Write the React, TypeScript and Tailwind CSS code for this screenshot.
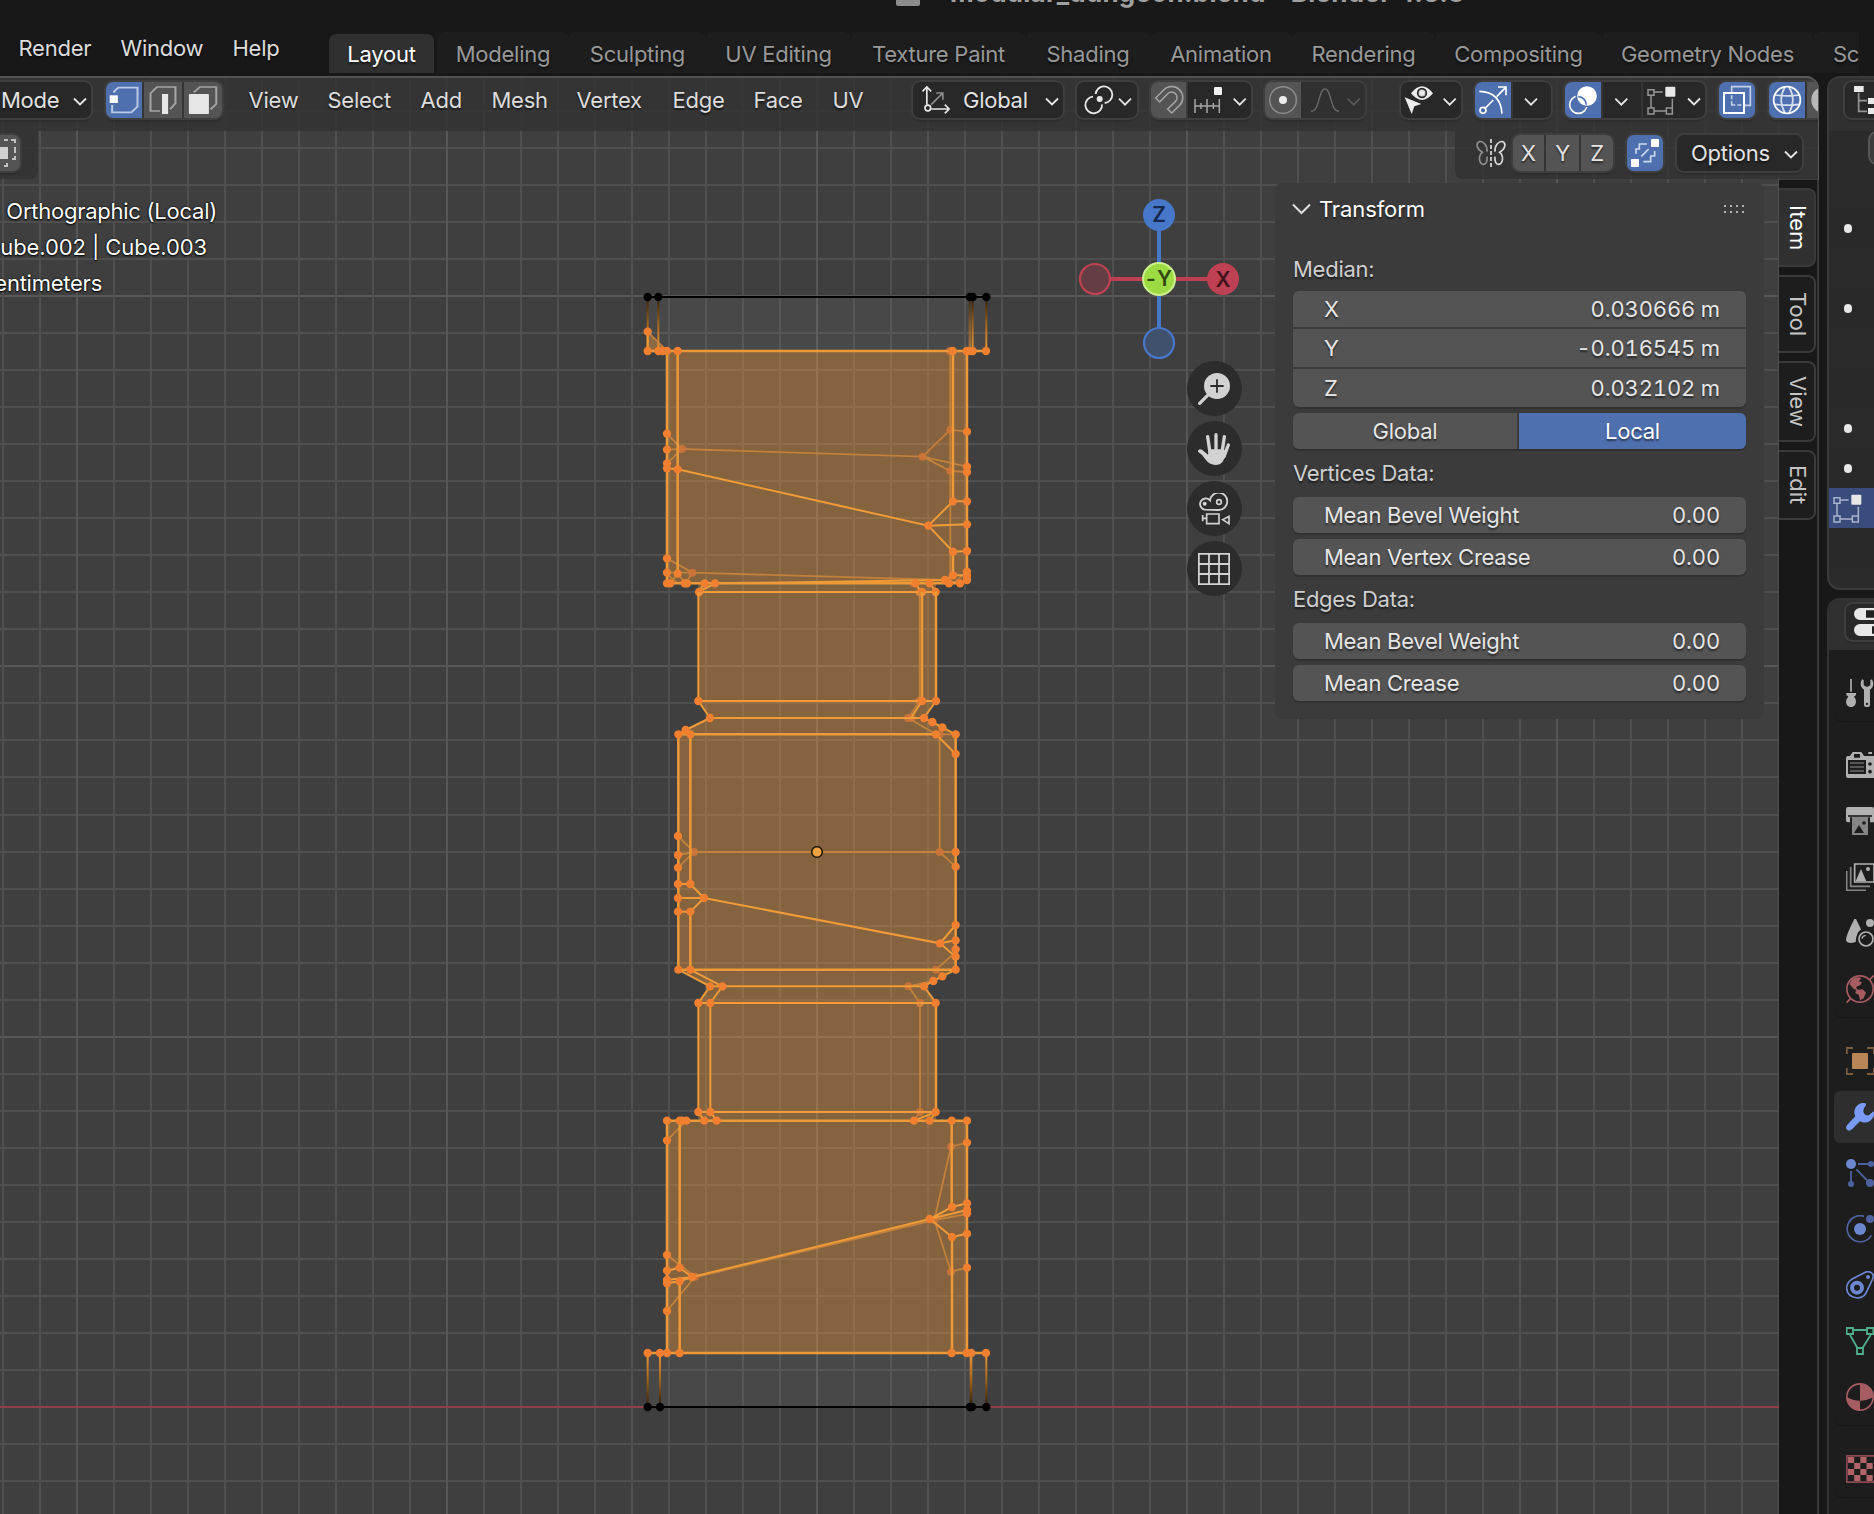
import React from "react";

type P = { children?: React.ReactNode };

function Ic({ vb, w, h, children, className = "", stretch = false }: P & { vb: string; w: number; h: number; className?: string; stretch?: boolean }) {
  return (
    <svg viewBox={vb} width={w} height={h} fill="none" preserveAspectRatio={stretch ? "none" : undefined} className={"block shrink-0 " + className}>
      {children}
    </svg>
  );
}

const SH = "[text-shadow:0_2px_2px_rgba(0,0,0,0.55)]";
const RING = "shadow-[0_0_0_2px_#3e3e3e,0_4px_1px_rgba(0,0,0,0.12)]";
const BTN = "flex h-9 shrink-0 overflow-hidden rounded-[7px] " + RING;

function Chevron({ color = "#e6e6e6", className = "" }: { color?: string; className?: string }) {
  return (
    <Ic vb="0 0 42 26" w={14} h={9} className={className}>
      <path d="M3 4 21 22 39 4" stroke={color} strokeWidth="5.5" />
    </Ic>
  );
}

/* ---------- top bar ---------- */

const tabs: [string, string][] = [
  ["Modeling", "w-[132px]"],
  ["Sculpting", "w-[137px]"],
  ["UV Editing", "w-[145px]"],
  ["Texture Paint", "w-[175px]"],
  ["Shading", "w-[124px]"],
  ["Animation", "w-[142px]"],
  ["Rendering", "w-[143px]"],
  ["Compositing", "w-[167px]"],
  ["Geometry Nodes", "w-[211px]"],
];

function TopBar() {
  return (
    <div className="relative flex h-[76px] shrink-0 bg-[#181818]">
      <div className="absolute left-[896px] top-0 h-[6px] w-6 rounded-b-[2px] bg-[#8c8c8c]" />
      <div className="absolute left-[950px] top-[-23px] w-[520px] whitespace-nowrap text-[26px] font-bold leading-[32px] text-[#a0a0a0] tracking-[0.25px]">
        modular_dungeon.blend - Blender 4.5.3
      </div>
      <div className={"flex w-[329px] shrink-0 pl-[18.5px] pt-[33px] leading-[30px] text-[#dcdcdc] " + SH}>
        <span className="w-[102px]">Render</span>
        <span className="w-[112px]">Window</span>
        <span>Help</span>
      </div>
      <div className="flex pt-8 text-[#989898]">
        <div className={"mt-[2px] h-[39px] w-[105px] rounded-t-[7px] bg-[#303030] text-center leading-[41px] text-white " + SH}>Layout</div>
        <div className="w-[3px]" />
        {tabs.map(([t, w]) => (
          <div key={t} className={"h-[41px] whitespace-nowrap rounded-t-[7px] bg-[#1d1d1d] text-center leading-[45px] " + w + " " + SH}>{t}</div>
        ))}
        <div className={"h-[41px] w-[46px] overflow-hidden rounded-tl-[7px] bg-[#1d1d1d] pl-5 leading-[45px] " + SH}>Sc</div>
      </div>
    </div>
  );
}

/* ---------- 3D view canvas ---------- */

type Pt = [number, number];
const FACE = "rgba(255,163,60,0.36)";

function Mesh({ strong, thick, faint, verts, dim }: { strong: string; thick: string; faint: string; verts: Pt[]; dim: Pt[] }) {
  return (
    <>
      <path d={faint} stroke="#cb853b" strokeWidth="5.5" opacity="0.85" />
      {dim.map(([x, y], i) => <circle key={i} cx={x} cy={y} r="12" fill="#d0743a" opacity="0.85" />)}
      <path d={strong} stroke="#f09b38" strokeWidth="6" />
      <path d={thick} stroke="#ee9937" strokeWidth="7.5" />
      {verts.map(([x, y], i) => <circle key={i} cx={x} cy={y} r="12.5" fill="#f08030" />)}
    </>
  );
}

function Canvas() {
  const vx = Array.from({ length: 49 }, (_, i) => i - 22);
  const hy = Array.from({ length: 40 }, (_, i) => 36 - i);
  return (
    <svg className="absolute inset-0" width="1819" height="1438" viewBox="0 76 1819 1438" fill="none">
      <defs>
        <linearGradient id="down" x1="0" y1="0" x2="0" y2="1">
          <stop offset="0" stopColor="#2a1a05" />
          <stop offset="0.5" stopColor="#a0641c" />
          <stop offset="1" stopColor="#ee9937" />
        </linearGradient>
        <linearGradient id="up" x1="0" y1="1" x2="0" y2="0">
          <stop offset="0" stopColor="#2a1a05" />
          <stop offset="0.5" stopColor="#a0641c" />
          <stop offset="1" stopColor="#ee9937" />
        </linearGradient>
      </defs>
      {hy.map((k) => <rect key={k} x="0" y={Math.round(1406 - 37.03 * k)} width="1819" height="2" fill={k % 10 === 0 ? "#575757" : "#4f4f4f"} />)}
      {vx.map((k) => <rect key={k} x={816 + 37 * k} y="76" width="2" height="1438" fill={k % 10 === 0 ? "#575757" : "#4f4f4f"} />)}
      <rect x="0" y="1406" width="1819" height="2" fill="#8f3f4a" />

      <g transform="translate(620 270) scale(0.333333)">
        <path d="M83 81H1099V243H83Z" fill="#fff" fillOpacity="0.05" />
        <path d="M141 243H1041V940H948V966H235V940H141ZM83 185L141 243H83Z" fill={FACE} />
        <rect x="80" y="81" width="6" height="162" fill="url(#down)" />
        <rect x="112" y="81" width="6" height="162" fill="url(#down)" />
        <rect x="1046" y="81" width="7" height="162" fill="url(#down)" opacity="0.6" />
        <rect x="1055" y="81" width="6" height="162" fill="url(#down)" />
        <rect x="1096" y="81" width="6" height="162" fill="url(#down)" />
        <Mesh
          faint="M83 185L141 243M991 243V930M141 491L186 537L141 580M141 539L186 537L908 560L991 479L1041 485M908 560L1041 590M908 560L991 603L1041 606M141 865L217 908L980 930M141 908L217 908L197 940M141 912L173 940M173 911L197 940M173 911L150 940M1041 905L1000 940M975 930L1020 940"
          strong="M83 185V243M141 595L173 598L925 767L999 694L1041 694M925 767L1041 763M925 767L999 845L1041 843M285 940L975 930L999 916H1041M235 966H948M254 940L235 966L285 940M885 940L905 966M929 940L948 966"
          thick="M83 243H1099M141 243V940M173 243V908M999 243V694M999 845V920M1041 243V930M141 940H1030"
          dim={[[186, 537], [908, 560], [991, 479], [991, 603], [217, 908], [990, 243], [880, 940], [898, 966]]}
          verts={[[83, 185], [83, 243], [115, 243], [128, 243], [141, 243], [173, 243], [998, 243], [1040, 243], [1050, 243], [1058, 243], [1098, 243], [141, 491], [141, 539], [141, 580], [141, 595], [173, 598], [1041, 485], [1041, 590], [1041, 606], [999, 694], [1041, 694], [925, 767], [1041, 763], [999, 845], [1041, 843], [141, 865], [141, 908], [173, 911], [141, 940], [151, 940], [194, 940], [201, 940], [254, 940], [285, 940], [887, 940], [929, 940], [975, 930], [987, 940], [999, 916], [1020, 940], [1041, 905], [1041, 918], [1041, 930], [237, 966], [906, 966], [947, 966]]}
        />
        <path d="M83 81H1099" stroke="#000" strokeWidth="6" />
        {[83, 115, 1050, 1058, 1099].map((x) => <circle key={x} cx={x} cy="81" r="12.5" fill="#000" />)}
      </g>

      <g transform="translate(620 560) scale(0.333333)">
        <path d="M235 96H948V423L912 474L1007 523V1229L912 1279L948 1329H235L270 1279L175 1229V523L270 474L235 423Z" fill={FACE} />
        <Mesh
          faint="M899 96V423L865 474L948 523H1007M959 523V876L1007 920M222 876H1007M174 828L222 876L174 923M174 885L222 876M1007 1176L948 1229M940 1263L865 1279L900 1329"
          strong="M235 96V423L270 474L197 510L175 523M906 423L873 474M948 423L912 474L937 486L967 502L1007 523M948 523L1007 582M175 972H211L252 1014L211 1055H175M175 1014H252L960 1150L1007 1095M960 1150L1007 1141M960 1150L1007 1190M175 1229L270 1279L235 1329M211 1229L307 1279L271 1329M1007 1229L967 1249L940 1263L912 1279L948 1329M270 1279H912M270 474H912M235 423H948M235 1329H948"
          thick="M175 523H948M175 523V1229M211 523V972M211 1055V1229M1007 523V1229M175 1229H1007M906 96V423M948 96V423"
          dim={[[898, 423], [864, 474], [875, 474], [959, 523], [222, 876], [959, 876], [948, 1229], [865, 1279], [900, 1329]]}
          verts={[[235, 423], [906, 423], [948, 423], [270, 474], [912, 474], [937, 486], [967, 502], [197, 510], [175, 523], [211, 523], [948, 523], [1007, 523], [1007, 582], [174, 828], [174, 885], [174, 923], [1007, 876], [1007, 920], [174, 972], [211, 972], [174, 1014], [252, 1014], [174, 1055], [211, 1055], [1007, 1095], [1007, 1141], [1007, 1168], [1007, 1190], [960, 1150], [175, 1229], [211, 1229], [1007, 1229], [967, 1249], [940, 1263], [270, 1279], [307, 1279], [912, 1279]]}
        />
        <circle cx="591" cy="876" r="16" fill="#f2a344" stroke="#2a1d0c" strokeWidth="5" />
      </g>

      <g transform="translate(620 960) scale(0.333333)">
        <path d="M83 1179H1099V1341H83Z" fill="#fff" fillOpacity="0.05" />
        <path d="M235 129H948V482H1041V1179H141V482H235Z" fill={FACE} />
        <rect x="80" y="1179" width="6" height="162" fill="url(#up)" />
        <rect x="117" y="1179" width="6" height="162" fill="url(#up)" />
        <rect x="1049" y="1179" width="8" height="162" fill="url(#up)" />
        <rect x="1096" y="1179" width="6" height="162" fill="url(#up)" />
        <Mesh
          faint="M900 129V456L882 482M141 541L199 482M1041 548L993 560L943 780L993 935L1041 923M1041 762L943 780L225 952M141 885L225 950L141 1053"
          strong="M235 129V456L253 482M271 129V456L290 482M948 456L882 482M948 456L929 482M235 456H948M1041 730L996 741L930 777L1041 750M930 777L996 831L1041 821M930 777L216 951L179 923L141 932M216 951L141 960M216 951L179 964L141 970"
          thick="M948 129V456M141 482H1041M141 482V1179M179 482V923M179 964V1179M995 482V741M996 831V1179M1041 482V1179M83 1179H1099"
          dim={[[900, 456], [993, 560], [943, 780], [993, 935], [225, 950]]}
          verts={[[235, 129], [271, 129], [947, 129], [235, 456], [271, 456], [947, 456], [141, 482], [179, 482], [186, 482], [199, 482], [253, 482], [290, 482], [882, 482], [929, 482], [995, 482], [1041, 482], [141, 541], [1041, 548], [1041, 730], [996, 741], [1041, 750], [1041, 760], [929, 777], [996, 831], [1041, 821], [1041, 923], [141, 885], [141, 932], [179, 923], [141, 960], [141, 970], [179, 964], [216, 951], [141, 1053], [83, 1179], [120, 1179], [141, 1179], [179, 1179], [995, 1179], [1040, 1179], [1054, 1179], [1098, 1179]]}
        />
        <path d="M83 1341H1099" stroke="#000" strokeWidth="6" />
        {[83, 120, 1050, 1056, 1099].map((x) => <circle key={x} cx={x} cy="1341" r="12.5" fill="#000" />)}
      </g>
    </svg>
  );
}

/* ---------- 3D view header ---------- */

function EditMeshIcon({ line = "#959595", fill = "#e8e8e8" }: { line?: string; fill?: string }) {
  return (
    <Ic vb="791 46 87 87" w={29} h={29}>
      <path d="M794 57H812V74H794ZM794 112H812V130H794ZM849 112H867V130H849ZM814 64H838M803 76V110M814 121H847M867 84V110" stroke={line} strokeWidth="4.5" />
      <rect x="846" y="48" width="30" height="30" rx="3" fill={fill} />
    </Ic>
  );
}

const menus: [string, string][] = [
  ["View", "w-[79px]"],
  ["Select", "w-[93px]"],
  ["Add", "w-[71px]"],
  ["Mesh", "w-[85px]"],
  ["Vertex", "w-[96px]"],
  ["Edge", "w-[81px]"],
  ["Face", "w-[79px]"],
  ["UV", "w-[80.5px]"],
];

function Header() {
  return (
    <div className="relative flex h-[53px] w-[1819px] shrink-0 overflow-hidden bg-[#323232]/85 pt-1 leading-9 text-[#e2e2e2]">
      <div className={"flex h-9 w-[91px] shrink-0 items-center rounded-r-[7px] bg-[#282828] " + RING}>
        <span className={"w-[73px] pl-[1px] " + SH}>Mode</span>
        <Chevron className="mt-0.5" />
      </div>
      <div className={BTN + " ml-[15px] gap-[2px]"}>
        <div className="w-9 bg-[#4f70af]">
          <Ic vb="260 246 88 108" w={36} h={36} stretch>
            <path d="M280 278V274L290 263H337V320L322 337H275V315" stroke="#b9c8e4" strokeWidth="5" />
            <rect x="269" y="286" width="20" height="23" fill="#fff" />
          </Ic>
        </div>
        <div className="w-[38px] bg-[#545454]">
          <Ic vb="353 246 93 108" w={38} h={36} stretch>
            <path d="M392 333H369V280L385 261H430V310L417 328" stroke="#a4a4a4" strokeWidth="5" />
            <rect x="397" y="282" width="15" height="60" fill="#e6e6e6" />
          </Ic>
        </div>
        <div className="w-[38px] bg-[#545454]">
          <Ic vb="451 246 93 108" w={38} h={36} stretch>
            <path d="M475 277L490 261H530V312L516 328" stroke="#a4a4a4" strokeWidth="5" />
            <rect x="463" y="282" width="49" height="60" rx="2" fill="#e6e6e6" />
          </Ic>
        </div>
      </div>
      <div className={"ml-[26.5px] flex shrink-0 text-[#dcdcdc] " + SH}>
        {menus.map(([t, w]) => <span key={t} className={w}>{t}</span>)}
      </div>

      <div className={BTN + " w-[150px] items-center bg-[#282828]"}>
        <Ic vb="22 36 110 108" w={37} h={36}>
          <path d="M76 104L111 69M91 69H111V89" stroke="#8e8e8e" strokeWidth="5" />
          <path d="M63 104V52M50 64L63 51L76 64M76 117H129M117 104L130 117L117 130" stroke="#e8e8e8" strokeWidth="5" />
          <circle cx="66" cy="114" r="8.5" stroke="#e8e8e8" strokeWidth="5" />
        </Ic>
        <span className={"ml-[13px] w-[82px] " + SH}>Global</span>
        <Chevron className="mt-0.5" />
      </div>

      <div className={BTN + " ml-[14px] w-[60px] items-center bg-[#282828]"}>
        <Ic vb="517 36 180 108" w={60} h={36}>
          <path d="M565 80A25 25 0 1 0 592 103M573 72A25 25 0 1 1 600 99" stroke="#e8e8e8" strokeWidth="5.5" />
          <circle cx="585" cy="87" r="9" fill="#e8e8e8" />
          <path d="M643 86L661 104L679 86" stroke="#e6e6e6" strokeWidth="5.5" />
        </Ic>
      </div>

      <div className={BTN + " ml-[14px] w-[100px] bg-[#282828]"}>
        <Ic vb="738 36 300 108" w={100} h={36}>
          <rect x="738" y="36" width="108" height="108" fill="#545454" />
          <path d="M846 36V144" stroke="#3a3a3a" strokeWidth="5" />
          <path d="M752 84L776 60A33 33 0 1 1 824 106L800 129L788 117L811 95A16 16 0 1 0 788 71L764 96Z" stroke="#a6a6a6" strokeWidth="4.5" />
          <path d="M870 87V129M906 87V129M943 87V129M870 108H943M888 99V117M925 99V117" stroke="#a6a6a6" strokeWidth="4.5" />
          <rect x="927" y="51" width="24" height="24" rx="3" fill="#f0f0f0" />
          <path d="M986 86L1004 104L1022 86" stroke="#e6e6e6" strokeWidth="5.5" />
        </Ic>
      </div>

      <div className={BTN + " ml-[14px] w-[100px] bg-[#303030]"}>
        <Ic vb="1080 36 300 108" w={100} h={36}>
          <rect x="1080" y="36" width="108" height="108" fill="#545454" />
          <circle cx="1134" cy="90" r="40" stroke="#8c8c8c" strokeWidth="4.5" />
          <circle cx="1134" cy="90" r="12" fill="#ececec" />
          <path d="M1218 124C1245 124 1240 57 1260 57S1275 124 1302 124" stroke="#656565" strokeWidth="4.5" />
          <path d="M1328 86L1346 104L1364 86" stroke="#585858" strokeWidth="5.5" />
        </Ic>
      </div>

      <div className={BTN + " ml-[36px] w-[60px] bg-[#282828]"}>
        <Ic vb="51 36 180 108" w={60} h={36}>
          <path d="M81 70Q114 28 147 70Q114 110 81 70Z" fill="#ececec" />
          <circle cx="114" cy="69" r="13" stroke="#282828" strokeWidth="5" fill="#cfcfcf" />
          <circle cx="114" cy="69" r="7" fill="#ececec" />
          <path d="M62 82L112 102L91 109L83 132Z" fill="#ececec" />
          <path d="M179 86L197 104L215 86" stroke="#e6e6e6" strokeWidth="5.5" />
        </Ic>
      </div>

      <div className={BTN + " ml-[14px] w-[76px] bg-[#282828]"}>
        <Ic vb="273 36 228 108" w={76} h={36}>
          <rect x="273" y="36" width="108" height="108" fill="#4f70af" />
          <path d="M286 64Q350 66 354 131M342 51H366V76" stroke="#fff" strokeWidth="5" />
          <path d="M304 114L328 90M338 80L365 52" stroke="#fff" strokeWidth="5" />
          <circle cx="297" cy="121" r="9" stroke="#fff" strokeWidth="5" />
          <path d="M384 36V144" stroke="#3a3a3a" strokeWidth="5" />
          <path d="M423 86L441 104L459 86" stroke="#e6e6e6" strokeWidth="5.5" />
        </Ic>
      </div>

      <div className={BTN + " ml-[14px] w-[140px] items-center bg-[#282828]"}>
        <Ic vb="543 36 234 108" w={78} h={36}>
          <rect x="543" y="36" width="108" height="108" fill="#4f70af" />
          <circle cx="583" cy="104" r="26" stroke="#fff" strokeWidth="5" />
          <circle cx="609" cy="78" r="34" fill="#4f70af" />
          <circle cx="609" cy="78" r="29.5" fill="#fff" />
          <path d="M583 80A25 25 0 0 1 607 104" stroke="#4f70af" strokeWidth="5" />
          <path d="M654 36V144M774 36V144" stroke="#3a3a3a" strokeWidth="5" />
          <path d="M694 86L712 104L730 86" stroke="#e6e6e6" strokeWidth="5.5" />
        </Ic>
        <div className="ml-[4px]"><EditMeshIcon /></div>
        <Chevron className="ml-[11px] mt-0.5" />
      </div>

      <div className={BTN + " ml-[14px] w-9 bg-[#4f70af]"}>
        <Ic vb="1005 36 108 108" w={36} h={36}>
          <path d="M1043 66V50H1099V106H1082" stroke="#c4d0e8" strokeWidth="5" />
          <path d="M1043 76V88M1043 94V105H1054M1060 105H1072" stroke="#c4d0e8" strokeWidth="5" />
          <rect x="1020" y="69" width="60" height="60" stroke="#fff" strokeWidth="6" />
        </Ic>
      </div>

      <div className={BTN + " ml-[14px] w-[60px]"}>
        <Ic vb="1155 36 180 108" w={60} h={36}>
          <rect x="1155" y="36" width="108" height="108" fill="#4f70af" />
          <path d="M1172 75Q1209 80 1246 75M1172 103Q1209 108 1246 103M1203 51Q1180 90 1203 129M1215 51Q1238 90 1215 129" stroke="#d5deef" strokeWidth="5" />
          <circle cx="1209" cy="90" r="40" stroke="#fff" strokeWidth="5.5" />
          <rect x="1269" y="36" width="66" height="108" fill="#545454" />
          <circle cx="1322" cy="90" r="40" fill="#b8b8b8" />
        </Ic>
      </div>
    </div>
  );
}

function ToolRow() {
  return (
    <div className="relative flex h-12 w-[1819px] shrink-0 justify-between leading-9">
      <div className="h-12 w-[38px] rounded-br-[8px] bg-[#323232]/85 pt-1">
        <div className={"h-9 w-5 rounded-r-[7px] bg-[#545454] " + RING}>
          <Ic vb="0 135 20 36" w={20} h={36}>
            <rect x="-4" y="147" width="12" height="12" fill="#d0d0d0" />
            <path d="M4 140H8M11 140H15V143M15 147V153M15 156V159H12M4 166H7V163" stroke="#c0c0c0" strokeWidth="2" />
          </Ic>
        </div>
      </div>
      <div className="flex h-12 w-[364px] rounded-bl-[8px] bg-[#323232]/85 pt-1 text-[#e2e2e2]">
        <Ic vb="273 195 96 108" w={32} h={36} className="ml-5">
          <path d="M309 245C311 226 297 212 286 215C275 219 277 236 295 247C281 258 286 280 297 283C306 285 311 272 309 260" stroke="#8e8e8e" strokeWidth="5" />
          <path d="M333 245C331 226 345 212 356 215C367 219 365 236 347 247C361 258 356 280 345 283C336 285 331 272 333 260" stroke="#d8d8d8" strokeWidth="5" />
          <path d="M321 207V291" stroke="#e0e0e0" strokeWidth="5" strokeDasharray="12 6" />
        </Ic>
        <div className={BTN + " ml-[6px] gap-[2px] text-center " + SH}>
          <span className="w-[31px] bg-[#545454]">X</span>
          <span className="w-[33px] bg-[#545454]">Y</span>
          <span className="w-8 bg-[#545454]">Z</span>
        </div>
        <div className={BTN + " ml-[14px] w-9 bg-[#4f70af]"}>
          <Ic vb="729 195 108 108" w={36} h={36}>
            <path d="M756 251V237H766V222H789M812 243V258H800V275H778M772 259L794 237" stroke="#cdd8ee" strokeWidth="5" />
            <rect x="801" y="207" width="24" height="24" rx="2" fill="#fff" />
            <rect x="741" y="267" width="24" height="24" rx="2" fill="#fff" />
          </Ic>
        </div>
        <div className={BTN + " ml-[14px] w-[125px] items-center bg-[#282828]"}>
          <span className={"ml-[14px] w-[93px] " + SH}>Options</span>
          <Chevron className="mt-0.5" />
        </div>
      </div>
    </div>
  );
}

/* ---------- viewport overlays ---------- */

const OUT = "[text-shadow:0_0_2px_#000,0_1px_2px_#000]";

function NavButton({ children }: P) {
  return <div className="flex h-[55px] w-[55px] items-center justify-center rounded-full bg-[#2c2c2c]">{children}</div>;
}

function ViewArea() {
  return (
    <div className="relative w-[1275px] shrink-0">
      <div className={"flex w-[217px] flex-col items-end pt-[14px] leading-9 text-white " + OUT}>
        <div className="whitespace-nowrap">Orthographic (Local)</div>
        <div className="mr-[10px] whitespace-nowrap tracking-[-0.1px]">ube.002 | Cube.003</div>
        <div className="mr-[115px] whitespace-nowrap">entimeters</div>
      </div>
      <svg className="absolute left-[1070px] top-[10px]" width="178" height="178" viewBox="1070 189 178 178" fill="none">
        <path d="M1159 215V343" stroke="#4677c8" strokeWidth="4" />
        <path d="M1095 279H1223" stroke="#bd4152" strokeWidth="4" />
        <circle cx="1095" cy="279" r="15" fill="#643e44" stroke="#bd4152" strokeWidth="2.2" />
        <circle cx="1159" cy="343" r="15" fill="#40526b" stroke="#4677c8" strokeWidth="2.2" />
        <circle cx="1159" cy="215" r="16" fill="#4677c8" />
        <circle cx="1223" cy="279" r="16" fill="#bd4152" />
        <circle cx="1159" cy="279" r="16" fill="#9ddb43" stroke="#cdf08e" strokeWidth="2" />
        <text x="1159" y="222" textAnchor="middle" fontSize="21" fontWeight="600" fill="#16294d">Z</text>
        <text x="1223" y="286.500" textAnchor="middle" fontSize="21" fontWeight="600" fill="#43131b">X</text>
        <text x="1146" y="286" fontSize="21" fontWeight="600" fill="#33480f">-</text>
        <text x="1157" y="286" fontSize="21" fontWeight="600" fill="#33480f">Y</text>
      </svg>
      <div className="absolute left-[1186.5px] top-[182px] flex flex-col gap-[5px]">
        <NavButton>
          <Ic vb="474 579 96 96" w={32} h={32}>
            <path d="M479 670L508 641" stroke="#d2d2d2" strokeWidth="10" strokeLinecap="round" />
            <circle cx="531" cy="618" r="39" fill="#d2d2d2" />
            <path d="M511 618H551M531 598V638" stroke="#2c2c2c" strokeWidth="5.500" />
          </Ic>
        </NavButton>
        <NavButton>
          <Ic vb="474 759 96 96" w={32} h={32}>
            <path d="M503 770L510 818M528 764V815M553 770L546 818M565 795L552 830" stroke="#d2d2d2" strokeWidth="10" strokeLinecap="round" />
            <path d="M474 812Q478 805 486 809L504 824L508 808H548L558 812Q554 855 527 855Q508 855 496 838Q486 822 474 815Z" fill="#d2d2d2" />
          </Ic>
        </NavButton>
        <NavButton>
          <Ic vb="474 939 96 96" w={32} h={32}>
            <path d="M494 989A17 17 0 1 1 510 961A26 26 0 1 1 537 990Z" stroke="#d2d2d2" strokeWidth="5.500" />
            <circle cx="494" cy="971" r="6" fill="#d2d2d2" />
            <circle cx="537" cy="966" r="7" stroke="#d2d2d2" strokeWidth="5" />
            <path d="M500 1002H537V1031H500ZM488 1005V1024M488 1015H500M548 1019L567 1009V1031Z" stroke="#d2d2d2" strokeWidth="5" />
          </Ic>
        </NavButton>
        <NavButton>
          <Ic vb="474 1119 96 96" w={32} h={32}>
            <path d="M476.500 1121.500H567.500V1212.500H476.500ZM507 1121V1212M537 1121V1212M476 1152H568M476 1182H568" stroke="#d2d2d2" strokeWidth="5.500" />
          </Ic>
        </NavButton>
      </div>
    </div>
  );
}

function Field({ label, value, className }: { label: string; value: string; className: string }) {
  return (
    <div className={"flex justify-between bg-[#545454] pl-[31px] pr-[26px] text-[#e6e6e6] " + SH + " " + className}>
      <span className="tracking-[-0.28px]">{label}</span>
      <span className="tracking-[-0.15px] tabular-nums">{value}</span>
    </div>
  );
}

const BS = "shadow-[0_2px_1px_rgba(0,0,0,0.18)]";

function Panel() {
  return (
    <div className="mt-1 h-[536px] w-[489px] shrink-0 rounded-[7px] bg-[#3b3b3b] pl-[18px] pr-[18px]">
      <div className={"flex h-[52px] items-center text-white " + SH}>
        <Ic vb="0 0 19 12" w={19} h={12} className="ml-[-1px]">
          <path d="M1 1.500L9.500 10L18 1.500" stroke="#e0e0e0" strokeWidth="2" />
        </Ic>
        <span className="ml-[8px] flex-1 tracking-[-0.1px]">Transform</span>
        <Ic vb="0 0 20 8" w={20} h={8} className="mr-0.5">
          <path d="M0 1H20M0 7H20" stroke="#b0b0b0" strokeWidth="2" strokeDasharray="2 4" />
        </Ic>
      </div>
      <div className={"mt-[14px] h-[42px] leading-10 text-[#cfcfcf] " + SH}>Median:</div>
      <div className={"flex flex-col gap-[2px] rounded-[7px] " + BS}>
        <Field label="X" value="0.030666 m" className="h-9 rounded-t-[6px] leading-9" />
        <Field label="Y" value="-0.016545 m" className="h-[38px] leading-[38px]" />
        <Field label="Z" value="0.032102 m" className="h-[38px] rounded-b-[6px] leading-[38px]" />
      </div>
      <div className={"mt-[6px] flex h-9 gap-[2px] overflow-hidden rounded-[6px] text-center leading-9 " + SH + " " + BS}>
        <div className="w-[224px] bg-[#545454] text-[#e6e6e6]">Global</div>
        <div className="flex-1 bg-[#4f70af] text-white">Local</div>
      </div>
      <div className={"h-12 leading-[48px] tracking-[-0.3px] text-[#cfcfcf] " + SH}>Vertices Data:</div>
      <Field label="Mean Bevel Weight" value="0.00" className={"h-9 rounded-[6px] leading-9 " + BS} />
      <Field label="Mean Vertex Crease" value="0.00" className={"mt-[6px] h-9 rounded-[6px] leading-9 " + BS} />
      <div className={"h-12 leading-[48px] tracking-[-0.3px] text-[#cfcfcf] " + SH}>Edges Data:</div>
      <Field label="Mean Bevel Weight" value="0.00" className={"h-9 rounded-[6px] leading-9 " + BS} />
      <Field label="Mean Crease" value="0.00" className={"mt-[6px] h-9 rounded-[6px] leading-9 " + BS} />
    </div>
  );
}

const sideTabs: [string, string][] = [
  ["Item", "h-[79px] bg-[#303030] text-white"],
  ["Tool", "h-[78px] bg-[#1d1d1d] text-[#c4c4c4]"],
  ["View", "h-[81px] bg-[#1d1d1d] text-[#c4c4c4]"],
  ["Edit", "h-[70px] bg-[#1d1d1d] text-[#c4c4c4]"],
];

function SideTabs() {
  return (
    <div className="ml-[15px] mt-px flex w-[40px] shrink-0 flex-col gap-[8px] border-r-2 border-[#383838] bg-[#181818] pt-2">
      {sideTabs.map(([t, c]) => (
        <div key={t} className={"flex w-[37px] items-center justify-center rounded-r-[8px] border-2 border-l-0 border-[#3a3a3a] pl-[2px] leading-none tracking-[0px] [writing-mode:vertical-rl] " + c}>{t}</div>
      ))}
    </div>
  );
}

function Viewport() {
  return (
    <div className="relative flex h-[1438px] w-[1819px] shrink-0 flex-col overflow-hidden rounded-tr-[13px] bg-[#3f3f3f]">
      <Canvas />
      <div className="relative h-[2px] shrink-0 bg-[#525252]" />
      <Header />
      <ToolRow />
      <div className="relative flex flex-1">
        <ViewArea />
        <Panel />
        <SideTabs />
      </div>
      <div className="pointer-events-none absolute right-0 top-0 h-[104px] w-10 rounded-tr-[13px] border-r-[1.5px] border-t-2 border-[#5a5a5a]" />
    </div>
  );
}

/* ---------- right column ---------- */

const dots = [true, false, true, false, false, true, true];

function Outliner() {
  return (
    <div className="h-[514px] w-[60px] overflow-hidden rounded-l-[13px] border-2 border-[#3a3a3a] bg-[#2b2b2b]">
      <div className="h-[53px] bg-[#303030] pl-4 pt-1">
        <div className={"h-9 w-12 rounded-l-[7px] bg-[#282828] pl-[9px] " + RING}>
          <Ic vb="1411 36 60 108" w={20} h={36}>
            <path d="M1425 68V124H1450M1425 92H1450" stroke="#959595" strokeWidth="5" />
            <path d="M1411 48H1440V66H1411ZM1453 84H1475V102H1453ZM1453 114H1475V132H1453Z" fill="#e8e8e8" />
          </Ic>
        </div>
      </div>
      <div className="h-[77px] pl-[39px]">
        <div className="h-[34px] w-8 rounded-l-[9px] border-2 border-[#555555] bg-[#3c3c3c]" />
      </div>
      {dots.map((dot, i) => (
        <div key={i} className={"flex h-10 items-center pl-[15px] " + (i % 2 === 0 ? "bg-[#282828]" : "bg-[#2b2b2b]")}>
          {dot && <div className="h-[9px] w-2 rounded-full bg-[#e6e6e6]" />}
        </div>
      ))}
      <div className="flex h-10 items-center bg-[#394c7b] pl-[4px]">
        <EditMeshIcon line="#a9b3cd" fill="#e8e8e8" />
      </div>
      <div className="h-10 bg-[#282828]" />
    </div>
  );
}

function PTab({ vb, children, active = false }: P & { vb: string; active?: boolean }) {
  return (
    <div className="flex h-14 items-center">
      <div className={"flex h-[52px] w-16 items-center rounded-l-[6px] pl-3 " + (active ? "bg-[#2e2e2e]" : "")}>
        <Ic vb={vb} w={28} h={28}>{children}</Ic>
      </div>
    </div>
  );
}

const GROUP = "ml-[5px] rounded-bl-[8px] border-b border-[#181818]";
const G = "#b0b0b0";
const B = "#6c87d0";
const D = "#4f62a0";
const R = "#a65c61";

function Properties() {
  return (
    <div className="mt-[8px] flex-1 overflow-hidden rounded-tl-[13px] border-l-2 border-t-2 border-[#333333] bg-[#1d1d1d]">
      <div className="h-[50px] bg-[#303030] pl-[17px] pt-1">
        <div className={"h-9 w-12 rounded-l-[7px] bg-[#282828] pl-[8px] " + RING}>
          <Ic vb="270 72 66 108" w={22} h={36}>
            <path d="M288 84H340V120H288A18 18 0 0 1 288 84ZM288 132H340V168H288A18 18 0 0 1 288 132Z" fill="#e8e8e8" />
            <path d="M306 91H340V113H306ZM324 139H340V161H324Z" fill="#202020" />
          </Ic>
        </div>
      </div>
      <div className="h-[15px]" />
      <div className={GROUP}>
        <PTab vb="246 297 84 84">
          <path d="M261 297V335" stroke={G} strokeWidth="5" />
          <path d="M247 339H276V345L270 350Q277 356 276 366Q274 381 261 381T246 366Q246 356 253 350L247 345Z" fill={G} />
          <path d="M294 298Q284 318 300 329V374Q300 381 309 381T318 374V329Q334 318 324 298L319 300V316L309 321L299 316V300Z" fill={G} />
          <circle cx="309" cy="372" r="3.500" fill="#1d1d1d" />
        </PTab>
      </div>
      <div className="h-[15px]" />
      <div className={GROUP}>
        <PTab vb="246 513 84 84">
          <path d="M252 528H258L266 516H292L300 528H330V594H252Q246 594 246 588V534Q246 528 252 528ZM313 516H324V522H313Z" fill={G} />
          <path d="M270 522H288V533H270ZM252 540H306V582H252Z" fill="#1d1d1d" />
          <path d="M258 549H300M258 561H300M258 573H300" stroke="#6a6a6a" strokeWidth="5" />
          <circle cx="318" cy="552" r="5.500" fill="#1d1d1d" />
          <circle cx="318" cy="575" r="5.500" fill="#1d1d1d" />
        </PTab>
        <PTab vb="246 681 84 84">
          <path d="M252 681H324Q330 681 330 688V727H318V712H258V727H252Q246 727 246 720V688Q246 681 252 681Z" fill={G} />
          <path d="M252 708H324" stroke="#1d1d1d" strokeWidth="5" />
          <path d="M264 711H312V765H264Z" fill="#858585" />
          <path d="M270 759L285 735L300 759Z" fill="#1d1d1d" />
          <circle cx="300" cy="729" r="5.500" fill="#1d1d1d" />
        </PTab>
        <PTab vb="246 849 84 84">
          <path d="M248 873V931H306M260 861V919H318" stroke="#858585" strokeWidth="5" />
          <path d="M272 852H330V906H272Z" stroke={G} strokeWidth="5" />
          <path d="M275 904L291 867L307 904Z" fill={G} />
          <circle cx="312" cy="867" r="6" fill={G} />
        </PTab>
        <PTab vb="246 1017 84 84">
          <path d="M271 1017H276L291 1048Q276 1060 275 1086Q246 1094 246 1078Q248 1062 271 1017Z" fill={G} />
          <circle cx="318" cy="1029" r="12" fill={G} />
          <circle cx="306" cy="1077" r="21" stroke={G} strokeWidth="5" />
          <path d="M294 1076Q295 1067 305 1066" stroke={G} strokeWidth="4" />
        </PTab>
        <PTab vb="246 1185 84 84">
          <circle cx="288" cy="1227" r="39.500" stroke={R} strokeWidth="5" />
          <path d="M264 1198Q280 1188 292 1194L284 1204L294 1206L290 1214L276 1222L282 1230L270 1228L256 1212ZM276 1230L296 1228L306 1238L298 1256L288 1260L284 1244L274 1240Z" fill={R} />
          <path d="M248 1268L260 1255M317 1199L329 1187" stroke={R} strokeWidth="5" />
        </PTab>
      </div>
      <div className="h-[15px]" />
      <div className={GROUP}>
        <PTab vb="246 51 84 84">
          <path d="M248 72V54H267M309 54H330V72M248 114V132H267M309 132H330V114" stroke="#7c5b3f" strokeWidth="6" />
          <rect x="264" y="69" width="48" height="48" rx="2" fill="#b88657" />
        </PTab>
        <PTab vb="246 219 84 84" active>
          <path d="M305 220Q288 215 276 230Q267 245 274 259L250 284Q243 292 249 299Q256 305 264 298L288 274Q306 282 319 272Q332 262 331 244L326 246L314 256Q300 258 298 244Q297 236 306 226Z" fill="#7a9bf4" />
        </PTab>
        <PTab vb="246 387 84 84">
          <path d="M282 402H318M261 423V460M277 418L316 458" stroke={D} strokeWidth="5.500" />
          <circle cx="321" cy="402" r="9" fill={D} />
          <circle cx="261" cy="462" r="9" fill={D} />
          <circle cx="318" cy="459" r="12" fill={D} />
          <circle cx="261" cy="402" r="15" fill={B} />
        </PTab>
        <PTab vb="246 555 84 84">
          <path d="M300 559A39 39 0 1 0 322 616" stroke={D} strokeWidth="5" />
          <circle cx="318" cy="567" r="12" fill={D} />
          <circle cx="288" cy="597" r="18" fill={B} />
        </PTab>
        <PTab vb="246 723 84 84">
          <path d="M263 748L301 728Q317 721 326 732Q330 739 325 749L306 789Q297 804 280 804Q249 801 248 774Q249 757 263 748Z" stroke={B} strokeWidth="5" />
          <circle cx="279" cy="773" r="15" stroke={B} strokeWidth="12" />
          <circle cx="312" cy="741" r="6" fill={B} />
        </PTab>
        <PTab vb="246 891 84 84">
          <path d="M248 894H267V912H248ZM309 894H328V912H309ZM279 954H297V972H279ZM267 900H309M258 915L280 953M320 915L296 953" stroke="#4fae8b" strokeWidth="5.500" />
        </PTab>
        <PTab vb="246 1059 84 84">
          <circle cx="288" cy="1101" r="39.500" stroke={R} strokeWidth="5" />
          <path d="M288 1061A40 40 0 0 1 328 1101Q310 1112 288 1112ZM248 1101Q266 1112 288 1112V1141A40 40 0 0 1 248 1101Z" fill={R} />
        </PTab>
      </div>
      <div className="h-[15px]" />
      <div className={GROUP}>
        <PTab vb="246 1275 84 84">
          <path d="M248.500 1277.500H335V1356.500H248.500Z" stroke="#8a4a50" strokeWidth="5" />
          {[0, 1, 2, 3].map((r) =>
            [0, 1, 2, 3].map((c) => (r + c) % 2 === 0 && (
              <rect key={r + "-" + c} x={252 + c * 18.5} y={1281 + r * 18} width="18.500" height="18" fill="#b06468" />
            ))
          )}
        </PTab>
      </div>
    </div>
  );
}

export default function App() {
  return (
    <div className="flex h-[1514px] w-[1874px] flex-col overflow-hidden bg-[#181818] font-['Inter',sans-serif] text-[22px] tracking-[-0.25px]">
      <TopBar />
      <div className="flex h-[1438px]">
        <Viewport />
        <div className="ml-[8px] flex w-[47px] shrink-0 flex-col overflow-hidden">
          <Outliner />
          <Properties />
        </div>
      </div>
    </div>
  );
}
